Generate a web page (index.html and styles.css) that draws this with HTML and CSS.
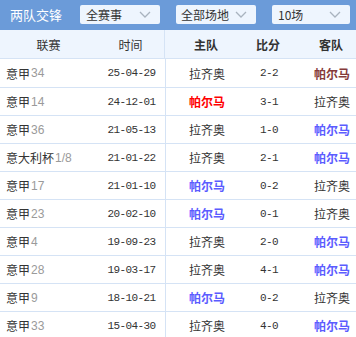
FILE: index.html
```html
<!DOCTYPE html>
<html lang="zh">
<head>
<meta charset="utf-8">
<link rel="stylesheet" href="styles.css">
</head>
<body>
<div class="panel">
  <div class="bar">
    <span class="title">两队交锋</span>
    <div class="select s1"><span>全赛事</span><svg class="chev" width="12" height="7" viewBox="0 0 12 7"><path d="M1 1 L6 6 L11 1" fill="none" stroke="#a9b3bf" stroke-width="1.3"/></svg></div>
    <div class="select s2"><span>全部场地</span><svg class="chev" width="12" height="7" viewBox="0 0 12 7"><path d="M1 1 L6 6 L11 1" fill="none" stroke="#a9b3bf" stroke-width="1.3"/></svg></div>
    <div class="select s3"><span>10场</span><svg class="chev" width="12" height="7" viewBox="0 0 12 7"><path d="M1 1 L6 6 L11 1" fill="none" stroke="#a9b3bf" stroke-width="1.3"/></svg></div>
  </div>
  <div class="row head">
    <div class="c league">联赛</div>
    <div class="c date">时间</div>
    <div class="c home b">主队</div>
    <div class="c score b">比分</div>
    <div class="c away b">客队</div>
  </div>
  <div class="rows">
    <div class="row"><div class="c league l">意甲<i>34</i></div><div class="c date m">25-04-29</div><div class="c home">拉齐奥</div><div class="c score m">2-2</div><div class="c away draw">帕尔马</div></div>
    <div class="row"><div class="c league l">意甲<i>14</i></div><div class="c date m">24-12-01</div><div class="c home win">帕尔马</div><div class="c score m">3-1</div><div class="c away">拉齐奥</div></div>
    <div class="row"><div class="c league l">意甲<i>36</i></div><div class="c date m">21-05-13</div><div class="c home">拉齐奥</div><div class="c score m">1-0</div><div class="c away lose">帕尔马</div></div>
    <div class="row"><div class="c league l">意大利杯<i>1/8</i></div><div class="c date m">21-01-22</div><div class="c home">拉齐奥</div><div class="c score m">2-1</div><div class="c away lose">帕尔马</div></div>
    <div class="row"><div class="c league l">意甲<i>17</i></div><div class="c date m">21-01-10</div><div class="c home lose">帕尔马</div><div class="c score m">0-2</div><div class="c away">拉齐奥</div></div>
    <div class="row"><div class="c league l">意甲<i>23</i></div><div class="c date m">20-02-10</div><div class="c home lose">帕尔马</div><div class="c score m">0-1</div><div class="c away">拉齐奥</div></div>
    <div class="row"><div class="c league l">意甲<i>4</i></div><div class="c date m">19-09-23</div><div class="c home">拉齐奥</div><div class="c score m">2-0</div><div class="c away lose">帕尔马</div></div>
    <div class="row"><div class="c league l">意甲<i>28</i></div><div class="c date m">19-03-17</div><div class="c home">拉齐奥</div><div class="c score m">4-1</div><div class="c away lose">帕尔马</div></div>
    <div class="row"><div class="c league l">意甲<i>9</i></div><div class="c date m">18-10-21</div><div class="c home lose">帕尔马</div><div class="c score m">0-2</div><div class="c away">拉齐奥</div></div>
    <div class="row"><div class="c league l">意甲<i>33</i></div><div class="c date m">15-04-30</div><div class="c home">拉齐奥</div><div class="c score m">4-0</div><div class="c away lose">帕尔马</div></div>
  </div>
</div>
</body>
</html>
```

FILE: styles.css
```css
html, body {
  margin: 0;
  padding: 0;
  background: #ffffff;
}
body {
  font-family: "Noto Sans CJK SC", "Liberation Sans", sans-serif;
  font-size: 12px;
  color: #333333;
  width: 356px;
  height: 337px;
  overflow: hidden;
}
.panel {
  width: 356px;
}
.bar {
  height: 30px;
  background: #6b9bd9;
  display: flex;
  align-items: center;
}
.title {
  color: #ffffff;
  font-size: 13px;
  margin-left: 10px;
  width: 60px;
  line-height: 30px;
}
.select {
  height: 19px;
  background: #eef5fe;
  border-radius: 2px;
  display: flex;
  align-items: center;
  justify-content: space-between;
  box-sizing: border-box;
  padding: 0 9px 0 6px;
  font-size: 12px;
  color: #333333;
  margin-top: -1px;
}
.select span {
  line-height: 19px;
}
.s1 {
  width: 80px;
  margin-left: 10px;
}
.s2 {
  width: 80px;
  margin-left: 16px;
  padding-left: 5px;
}
.s3 {
  width: 78px;
  margin-left: 16px;
}
.row {
  display: grid;
  grid-template-columns: 97px 68px 82px 42px 67px;
  height: 28px;
  border-bottom: 1px solid #d5e3f5;
  box-sizing: content-box;
}
.head {
  height: 28px;
  background: #eef5fe;
  font-size: 12px;
}
.rows .row {
  border-left: 1px solid #6b9bd9;
  margin-left: -1px;
  padding-left: 1px;
  height: 27px;
}
.rows .row:first-child {
  height: 28px;
}
.c {
  display: flex;
  align-items: center;
  justify-content: center;
  white-space: nowrap;
}
.date {
  border-right: 1px solid #d5e3f5;
}
.away {
  padding-left: 17px;
}
.b {
  font-weight: bold;
  color: #333333;
}
.l {
  justify-content: flex-start;
  padding-left: 5px;
}
.l i {
  font-style: normal;
  color: #9a9a9a;
  font-size: 12px;
  margin-left: 1px;
  font-family: "Liberation Sans", sans-serif;
}
.m {
  font-family: "Liberation Mono", monospace;
  font-size: 11px;
  letter-spacing: -0.6px;
}
.win {
  color: #ff0000;
  font-weight: bold;
}
.lose {
  color: #5b5cff;
  font-weight: bold;
}
.draw {
  color: #853a3a;
  font-weight: bold;
}
```
